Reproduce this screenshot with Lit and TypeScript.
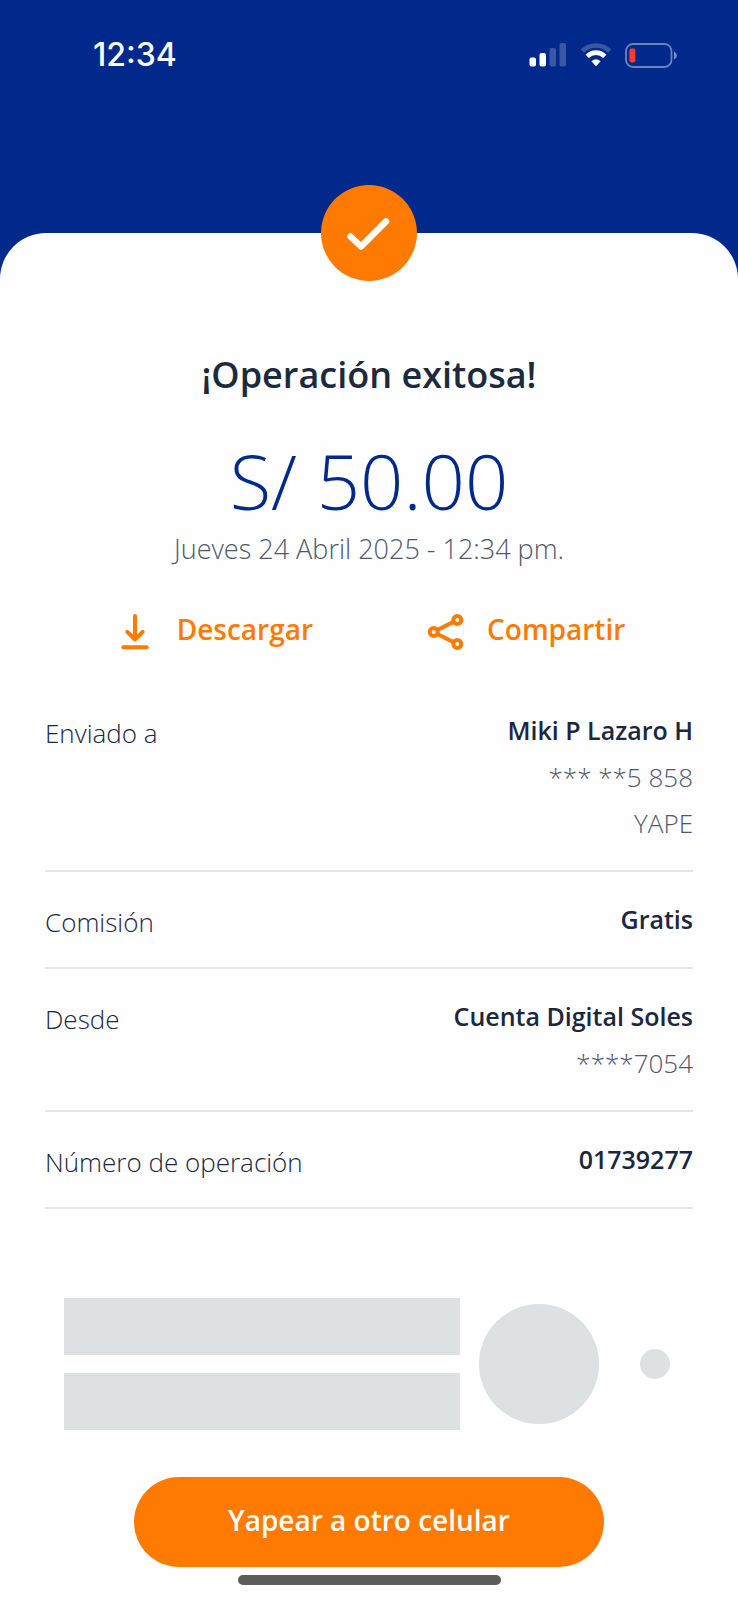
import { LitElement, html, svg, css } from "lit";
import { customElement, property } from "lit/decorators.js";

interface Detail {
  label: string;
  value: string;
  notes: string[];
}

const DETAILS: Detail[] = [
  { label: "Enviado a", value: "Miki P Lazaro H", notes: ["*** **5 858", "YAPE"] },
  { label: "Comisión", value: "Gratis", notes: [] },
  { label: "Desde", value: "Cuenta Digital Soles", notes: ["****7054"] },
  { label: "Número de operación", value: "01739277", notes: [] },
];

@customElement("status-bar")
export class StatusBar extends LitElement {
  @property() time = "";

  static styles = css`
    :host {
      display: flex;
      justify-content: space-between;
      align-items: center;
      padding: 35px 60px 0 93px;
      color: #fff;
      font: 500 32px/40px Inter, sans-serif;
    }
    .icons {
      display: flex;
      align-items: center;
      gap: 13px;
    }
    svg {
      display: block;
    }
  `;

  render() {
    return html`
      <span>${this.time}</span>
      <div class="icons">
        <svg width="38" height="24" viewBox="0 0 38 24" fill="#fff" aria-label="Señal">
          <rect x="0.5" y="14.5" width="6.5" height="9" rx="2" />
          <rect x="10.5" y="10" width="6.5" height="13.5" rx="2" />
          <rect x="20.5" y="5" width="6.5" height="18.5" rx="2" opacity="0.22" />
          <rect x="30.5" y="0" width="6.5" height="23.5" rx="2" opacity="0.22" />
        </svg>
        <svg width="32" height="24" viewBox="0 0 32 24" fill="none" aria-label="Wi-Fi">
          <path d="M2.4 8.2 C10 0.6 22 0.6 29.6 8.2" stroke="#fff" stroke-opacity="0.22" stroke-width="4.6" />
          <path d="M7.2 13.4 C12.4 8.4 19.6 8.4 24.8 13.4" stroke="#fff" stroke-width="4.6" />
          <path d="M11.4 18.2 Q16 14.2 20.6 18.2 L16.8 22.6 Q16 23.4 15.2 22.6Z" fill="#fff" />
        </svg>
        <svg width="53" height="25" viewBox="0 0 53 25" fill="none" aria-label="Batería">
          <rect x="1" y="1" width="45.5" height="23" rx="7" stroke="#fff" stroke-opacity="0.42" stroke-width="1.8" />
          <rect x="4.4" y="5.5" width="6" height="14" rx="2.2" fill="#ff3b30" />
          <path d="M49 8.6 Q51.8 10 51.8 12.5 Q51.8 15 49 16.4Z" fill="#fff" fill-opacity="0.5" />
        </svg>
      </div>
    `;
  }
}

@customElement("detail-list")
export class DetailList extends LitElement {
  @property({ attribute: false }) items: Detail[] = [];

  static styles = css`
    :host {
      display: block;
    }
    dl,
    dt,
    dd {
      margin: 0;
    }
    .row {
      display: flex;
      justify-content: space-between;
      gap: 24px;
      padding: 31px 0 32px;
      border-bottom: 2px solid #e5e6e7;
      font-size: 26px;
      line-height: 32px;
      color: #1b2740;
    }
    .label {
      padding-top: 3px;
      font-weight: 300;
      line-height: 32px;
      margin-bottom: -3px;
    }
    .values {
      display: flex;
      flex-direction: column;
      gap: 16px;
      text-align: right;
    }
    .value {
      font-size: 25px;
      font-weight: 600;
    }
    .note {
      font-weight: 300;
      line-height: 30px;
      color: #4f586c;
    }
  `;

  render() {
    return html`
      <dl>
        ${this.items.map(
          (d) => html`
            <div class="row">
              <dt class="label">${d.label}</dt>
              <div class="values">
                <dd class="value">${d.value}</dd>
                ${d.notes.map((n) => html`<dd class="note">${n}</dd>`)}
              </div>
            </div>
          `
        )}
      </dl>
    `;
  }
}

const downloadIcon = svg`
  <path d="M20 7 V30 M12.3 22.8 L20 30.5 L27.7 22.8" />
  <path d="M8.3 38.3 H31.7" />
`;

const shareIcon = svg`
  <path d="M12.3 21 L28.5 12.9 M12.3 25 L28.5 33.1" />
  <circle cx="8.7" cy="23" r="4" />
  <circle cx="32.3" cy="11" r="4" />
  <circle cx="32.3" cy="35" r="4" />
`;

@customElement("app-root")
export class AppRoot extends LitElement {
  static styles = css`
    :host {
      box-sizing: border-box;
      display: flex;
      flex-direction: column;
      min-height: 100vh;
      background: #00298c;
      font-family: "Open Sans", "Noto Sans", sans-serif;
      color: #1b2a3d;
    }
    .top {
      min-height: 233px;
    }
    .sheet {
      flex: 1;
      display: flex;
      flex-direction: column;
      border-radius: 46px 46px 0 0;
      background: #fefefe;
    }
    .badge {
      align-self: center;
      display: grid;
      place-items: center;
      width: 96px;
      height: 96px;
      margin-top: -48px;
      border-radius: 50%;
      background: #ff7a00;
    }
    .summary {
      display: flex;
      flex-direction: column;
      align-items: center;
      padding: 70px 24px 0;
      text-align: center;
    }
    h1,
    p {
      margin: 0;
    }
    h1 {
      font-size: 36px;
      font-weight: 600;
      line-height: 48px;
    }
    .amount {
      margin-top: 40px;
      font-size: 76px;
      font-weight: 300;
      line-height: 84px;
      color: #00298c;
    }
    .date {
      margin-top: 8px;
      font-size: 27px;
      font-weight: 300;
      line-height: 36px;
      color: #4f586c;
    }
    .actions {
      display: flex;
      justify-content: center;
      gap: 112px;
      margin-top: 42px;
      padding-left: 2px;
    }
    button {
      border: 0;
      padding: 0;
      background: none;
      font: inherit;
      cursor: pointer;
    }
    .action {
      display: flex;
      gap: 22px;
      font-size: 28px;
      font-weight: 600;
      line-height: 40px;
      color: #ff7a00;
    }
    .action svg {
      fill: none;
      stroke: currentColor;
      stroke-width: 4;
      stroke-linecap: round;
      stroke-linejoin: round;
    }
    .details {
      margin: 30px 45px 0;
    }
    .loading {
      display: flex;
      align-items: center;
      margin-top: 89px;
      padding: 0 68px 0 64px;
    }
    .lines {
      flex: 1;
      display: flex;
      flex-direction: column;
      gap: 18px;
    }
    .line {
      height: 57px;
      background: #dde1e2;
    }
    .disc,
    .dot {
      border-radius: 50%;
      background: #dde1e2;
    }
    .disc {
      width: 120px;
      height: 120px;
      margin: 0 41px 0 19px;
    }
    .dot {
      width: 30px;
      height: 30px;
    }
    .primary {
      align-self: center;
      width: 470px;
      max-width: 90%;
      height: 90px;
      margin-top: 47px;
      padding-bottom: 4px;
      border-radius: 45px;
      background: #ff7a00;
      color: #fff;
      font-size: 28px;
      font-weight: 600;
    }
    .home {
      align-self: center;
      width: 263px;
      height: 10px;
      margin: 8px 0 15px;
      border-radius: 5px;
      background: #5c5c5c;
    }
  `;

  render() {
    return html`
      <header class="top"><status-bar time="12:34"></status-bar></header>
      <main class="sheet">
        <div class="badge">
          <svg width="96" height="96" viewBox="0 0 96 96" fill="none" aria-hidden="true">
            <path
              d="M29.5 51.5 L40 61.5 L65 36.5"
              stroke="#fff"
              stroke-width="6.5"
              stroke-linecap="round"
              stroke-linejoin="round"
            />
          </svg>
        </div>
        <section class="summary">
          <h1>¡Operación exitosa!</h1>
          <p class="amount">S/ 50.00</p>
          <p class="date">Jueves 24 Abril 2025 - 12:34 pm.</p>
        </section>
        <div class="actions">
          <button class="action" type="button">
            <svg width="40" height="44" viewBox="0 0 40 44" aria-hidden="true">${downloadIcon}</svg>
            Descargar
          </button>
          <button class="action" type="button">
            <svg width="40" height="44" viewBox="0 0 40 44" aria-hidden="true">${shareIcon}</svg>
            Compartir
          </button>
        </div>
        <detail-list class="details" .items=${DETAILS}></detail-list>
        <div class="loading" aria-hidden="true">
          <div class="lines">
            <div class="line"></div>
            <div class="line"></div>
          </div>
          <div class="disc"></div>
          <div class="dot"></div>
        </div>
        <button class="primary" type="button">Yapear a otro celular</button>
        <div class="home"></div>
      </main>
    `;
  }
}
